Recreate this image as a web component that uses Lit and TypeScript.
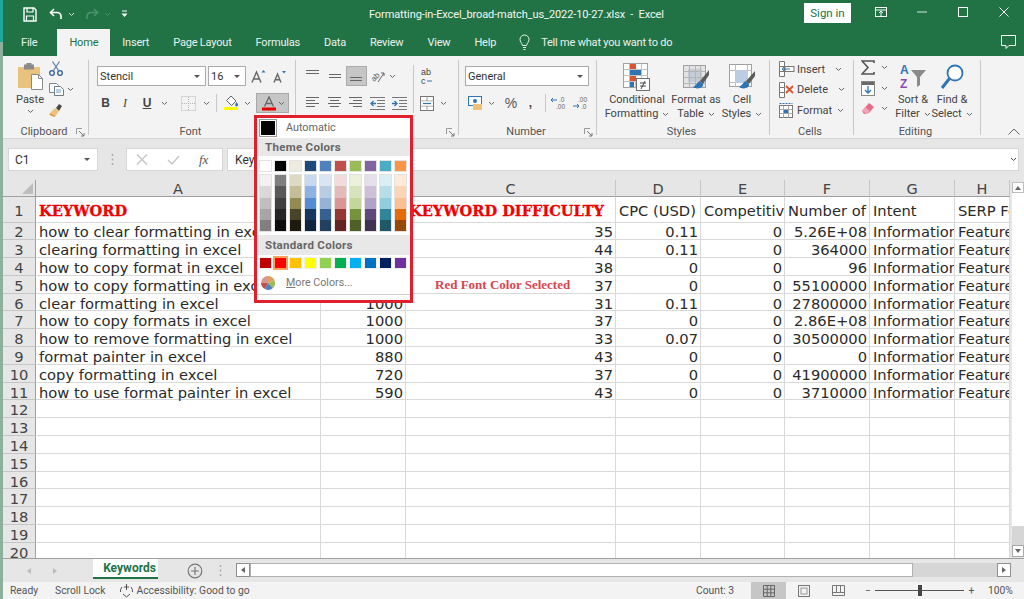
import { LitElement, html, css, svg } from "lit";
import { customElement } from "lit/decorators.js";

const chev = (c = "#666") => html`<svg class="chev" width="7" height="5" viewBox="0 0 7 5"><path d="M1 1l2.500 2.500L6 1" fill="none" stroke="${c}" stroke-width="1"/></svg>`;
const launcher = html`<svg width="9" height="9" viewBox="0 0 9 9"><path d="M.5 6V.5H6" fill="none" stroke="#999"/><path d="M3 3l5 5M8 5v3H5" fill="none" stroke="#777"/></svg>`;

const THEME = [
  ["#ffffff", "#f2f2f2", "#d9d9d9", "#bfbfbf", "#a6a6a6", "#808080"],
  ["#000000", "#7f7f7f", "#595959", "#404040", "#262626", "#0d0d0d"],
  ["#eeece1", "#ddd9c3", "#c4bd97", "#948a54", "#4a452a", "#1d1b10"],
  ["#1f497d", "#c6d9f0", "#8db3e2", "#548dd4", "#17365d", "#0f243e"],
  ["#4f81bd", "#dbe5f1", "#b8cce4", "#95b3d7", "#366092", "#244061"],
  ["#c0504d", "#f2dcdb", "#e5b9b7", "#d99694", "#953734", "#632423"],
  ["#9bbb59", "#ebf1dd", "#d7e3bc", "#c3d69b", "#76923c", "#4f6128"],
  ["#8064a2", "#e5e0ec", "#ccc1d9", "#b2a2c7", "#5f497a", "#3f3151"],
  ["#4bacc6", "#dbeef3", "#b7dde8", "#92cddc", "#31859b", "#205867"],
  ["#f79646", "#fdeada", "#fbd5b5", "#fac08f", "#e36c09", "#974806"],
];
const STD = ["#c00000", "#ff0000", "#ffc000", "#ffff00", "#92d050", "#00b050", "#00b0f0", "#0070c0", "#002060", "#7030a0"];

const COLS = ["A", "B", "C", "D", "E", "F", "G", "H"];
const KW = ["how to clear formatting in excel", "clearing formatting in excel", "how to copy format in excel", "how to copy formatting in excel", "clear formatting in excel", "how to copy formats in excel", "how to remove formatting in excel", "format painter in excel", "copy formatting in excel", "how to use format painter in excel"];
const VOL = ["", "", "", "", "1000", "1000", "1000", "880", "720", "590"];
const KD = ["35", "44", "38", "37", "31", "37", "33", "43", "37", "43"];
const CPC = ["0.11", "0.11", "0", "0", "0.11", "0", "0.07", "0", "0", "0"];
const NUM = ["5.26E+08", "364000", "96", "55100000", "27800000", "2.86E+08", "30500000", "0", "41900000", "3710000"];

const alignLines = (rows: number[][]) => html`<svg width="16" height="14" viewBox="0 0 16 14">${rows.map(([x, y, w]) => svg`<rect x="${x}" y="${y}" width="${w}" height="1" fill="#666"/>`)}</svg>`;

@customElement("app-root")
export class AppRoot extends LitElement {
  static styles = css`
    :host { display: block; width: 1024px; height: 599px; overflow: hidden; font-family: "Roboto", "Liberation Sans", sans-serif; }
    * { box-sizing: border-box; }
    svg { display: block; flex: none; }
    .app { position: relative; display: flex; width: 1024px; height: 599px; background: #e6e6e6; color: #444; font-size: 11px; }
    .edge { width: 3px; flex: none; display: flex; flex-direction: column; background: #8db09c; }
    .edge i { display: block; height: 42px; background: #1fa59a; }
    .main { width: 1021px; display: flex; flex-direction: column; }

    .title { height: 28px; background: #217346; color: #f2f7f4; display: flex; align-items: center; padding-left: 20px; font-size: 11px; }
    .title .save { margin-right: 12px; }
    .qa { display: flex; align-items: center; gap: 5px; width: 68px; }
    .qa .gap { width: 8px; }
    .doc { width: 346px; margin-left: 252px; white-space: pre; letter-spacing: -0.1px; flex: none; }
    .signin { width: 52px; height: 20px; background: #fff; color: #217346; display: flex; align-items: center; justify-content: center; margin-left: 89px; margin-top: -3px; font-size: 11.5px; }
    .win { display: flex; align-items: center; margin-left: 9px; margin-top: -4px; }
    .win span { width: 41px; display: flex; justify-content: center; }

    .tabs { height: 28px; background: #217346; color: #eaf2ed; display: flex; align-items: flex-end; padding-left: 6px; font-size: 11px; letter-spacing: -0.2px; }
    .tab { height: 27px; padding: 0 12px; display: flex; align-items: center; white-space: nowrap; }
    .tab.file { margin-right: 8px; }
    .tab.on { background: #f3f3f3; color: #217346; }
    .tell { display: flex; align-items: center; height: 27px; margin-left: 11px; gap: 11px; }
    .comment { margin-left: auto; margin-right: 8px; height: 27px; display: flex; align-items: center; }

    .ribbon { height: 83px; background: #f3f3f3; display: flex; padding-top: 4px; border-bottom: 1px solid #d4d4d4; }
    .grp { height: 75px; border-right: 1px solid #c8c8c8; flex: none; display: flex; flex-direction: column; }
    .g1 { width: 86px; } .g2 { width: 207px; } .g3 { width: 163px; } .g4 { width: 138px; } .g5 { width: 173px; } .g6 { width: 84px; } .g7 { width: 127px; }
    .gc { flex: 1; min-height: 0; }
    .lbl { height: 14px; margin-bottom: -4px; display: grid; grid-template-columns: 1fr auto 1fr; align-items: center; line-height: 14px; color: #555; padding-right: 3px; }
    .lbl svg { justify-self: end; }
    .stack { padding-top: 6px; display: flex; flex-direction: column; gap: 7px; }
    .row { display: flex; align-items: center; height: 20px; }
    .ib { display: flex; align-items: center; justify-content: center; height: 20px; flex: none; }
    .w8 { width: 8px; } .w10 { width: 10px; } .w12 { width: 12px; } .w17 { width: 17px; } .w21 { width: 21px; } .w22 { width: 22px; } .w24 { width: 24px; }
    .ml2 { margin-left: 2px; } .ml4 { margin-left: 4px; } .ml6 { margin-left: 6px; } .ml3 { margin-left: 3px; }
    .box { height: 20px; background: #fff; border: 1px solid #ababab; display: flex; align-items: center; padding: 0 5px 0 2px; color: #333; font-size: 11px; justify-content: space-between; flex: none; }
    .fontsel { width: 109px; } .sizesel { width: 38px; margin-left: 2px; } .numsel { width: 124px; }
    .tri { width: 0; height: 0; border-left: 3px solid transparent; border-right: 3px solid transparent; border-top: 3px solid #555; }
    .g2 .gc { padding-left: 8px; }
    .b { font: bold 12px "Liberation Sans", sans-serif; color: #444; }
    .i { font: italic 12px "Liberation Serif", serif; color: #444; }
    .u { font: bold 12px "Liberation Sans", sans-serif; text-decoration: underline; color: #444; }
    .sep { width: 1px; height: 18px; background: #c8c8c8; flex: none; }
    .grow-a { font: 14px "Liberation Sans", sans-serif; color: #555; }
    .fc { width: 33px; height: 20px; background: #c6c6c6; border: 1px solid #a8a8a8; margin-left: 4px; display: flex; align-items: center; padding-left: 2px; flex: none; }
    .fc .ib { width: 19px; }

    .clip { display: flex; padding-left: 13px; }
    .paste { width: 28px; padding-top: 3px; display: flex; flex-direction: column; align-items: center; }
    .paste .t { margin-top: 3px; line-height: 13px; }
    .paste .chev { margin-top: 3px; }
    .clipr { margin-left: 5px; padding-top: 1px; display: flex; flex-direction: column; gap: 7px; }
    .clipr div { display: flex; align-items: center; gap: 3px; }

    .g3 .gc { padding-left: 6.5px; display: flex; }
    .alL { width: 110.5px; flex: none; }
    .aln { width: 21.5px; }
    .tallsep { width: 1px; height: 48px; margin-top: 5px; background: #c8c8c8; flex: none; }
    .alR { padding-left: 2px; }
    .sel { background: #c6c6c6; border: 1px solid #ababab; }

    .g4 .gc { padding-left: 6px; }
    .g5 .gc { display: flex; padding-left: 8px; gap: 4px; }
    .big { display: flex; flex-direction: column; align-items: center; padding-top: 3px; flex: none; }
    .big .ic { height: 30px; }
    .big .tx { line-height: 14px; text-align: center; white-space: nowrap; display: flex; align-items: center; gap: 4px; justify-content: center; height: 14px; }
    .c1 { width: 64px; } .c2 { width: 46px; } .c3 { width: 38px; }
    .g6 .gc { padding-left: 9px; display: flex; flex-direction: column; }
    .cr { height: 20.5px; display: flex; align-items: center; gap: 2px; }
    .cr:first-child { margin-top: -1px; }
    .cr .chev { margin-left: 8px; }
    .cr:last-child .chev { margin-left: 3px; }
    .g7 .gc { display: flex; padding-left: 7px; }
    .edl { width: 34px; margin-top: -2.5px; display: flex; flex-direction: column; flex: none; }
    .edl div { height: 20.5px; display: flex; align-items: center; gap: 6px; }
    .s1 { width: 36px; } .s2 { width: 38px; margin-left: 2px; }
    .collapse { margin-left: auto; margin-right: 4px; align-self: flex-end; margin-bottom: 3px; }

    .fbar { height: 41px; padding: 9px 0 0 5px; display: flex; }
    .fbar > * { height: 23px; flex: none; }
    .name { width: 90px; background: #fff; border: 1px solid #d6d6d6; display: flex; align-items: center; justify-content: space-between; padding: 0 7px 0 6px; font-size: 12px; color: #333; }
    .dots { width: 28px; display: flex; align-items: center; justify-content: center; }
    .fbtn { width: 97px; background: #fff; border: 1px solid #d6d6d6; display: flex; align-items: center; padding-left: 9px; gap: 19px; }
    .fx { font: italic 13px "Liberation Serif", serif; color: #555; width: 14px; }
    .fin { width: 792px; margin-left: 4px; background: #fff; border: 1px solid #d6d6d6; display: flex; align-items: center; justify-content: space-between; padding: 0 1px 0 7px; font-size: 12px; color: #333; }

    .gridwrap { height: 378px; display: flex; }
    .sheet { width: 1007px; height: 378px; overflow: hidden; background: #fff; display: grid; grid-template-columns: 33px 285px 85px 210px 85px 84px 85px 85px 55px; grid-auto-rows: 17.8px; grid-template-rows: 17px 25.5px; font: 14.7px "DejaVu Sans", sans-serif; color: #2a2a2a; align-content: start; }
    .sheet > div { border-right: 1px solid #d9d9d9; border-bottom: 1px solid #d9d9d9; overflow-x: clip; overflow-y: visible; white-space: nowrap; display: flex; align-items: center; padding: 2px 2px 0 3px; line-height: 17px; }
    .sheet .hd { background: #e6e6e6; border-right: 1px solid #c6c6c6; border-bottom: 1px solid #9f9f9f; justify-content: center; color: #444; font-size: 14.5px; padding: 3px 0 0; }
    .sheet .rh { background: #e6e6e6; border-right: 1px solid #9f9f9f; border-bottom: 1px solid #c6c6c6; justify-content: center; color: #444; padding: 2px 0 0; overflow: hidden; }
    .sheet .corner { background: #e6e6e6; border-right: 1px solid #9f9f9f; border-bottom: 1px solid #9f9f9f; justify-content: flex-end; align-items: flex-end; padding: 0 2px 2px 0; }
    .sheet .r { justify-content: flex-end; }
    .sheet .k { font: bold 14.6px "DejaVu Serif", serif; color: #f00000; -webkit-text-stroke: 0.3px #f00000; }
    .sheet .ann { position: relative; overflow: visible; }
    .note { position: absolute; left: 29px; top: 1px; line-height: 17px; font: bold 13px "Liberation Serif", serif; color: #d9444e; }
    .sheet .clip0 { padding-right: 0; }

    .vs { width: 14px; background: #e6e6e6; padding: 2px 0 1px 2px; display: flex; flex-direction: column; flex: none; }
    .vs .up { height: 11px; background: #fff; border: 1px solid #bdbdbd; display: flex; align-items: center; justify-content: center; flex: none; }
    .vs .dn { height: 12px; background: #fff; border: 1px solid #a8a8a8; display: flex; align-items: center; justify-content: center; flex: none; }
    .vs .th { height: 333px; background: #fff; flex: none; }
    .vs .sp { flex: 1; background: #d6d6d6; }
    .utri { border-bottom: 4px solid #666; border-left: 3px solid transparent; border-right: 3px solid transparent; width: 0; height: 0; }
    .dtri { border-top: 4px solid #666; border-left: 3px solid transparent; border-right: 3px solid transparent; width: 0; height: 0; }

    .stabs { height: 24px; display: flex; background: #e6e6e6; border-top: 1px solid #9f9f9f; }
    .nav { width: 90px; display: flex; align-items: center; padding-left: 24px; gap: 22px; flex: none; }
    .ltri { border-right: 4px solid #bbb; border-top: 3px solid transparent; border-bottom: 3px solid transparent; width: 0; height: 0; }
    .rtri { border-left: 4px solid #bbb; border-top: 3px solid transparent; border-bottom: 3px solid transparent; width: 0; height: 0; }
    .sheettab { width: 65px; height: 20px; background: #fff; color: #217346; font: bold 12px "Roboto", sans-serif; display: flex; align-items: center; justify-content: center; padding-left: 8px; border-bottom: 2px solid #217346; flex: none; }
    .plus { margin-left: 29px; width: 16px; display: flex; align-items: center; flex: none; }
    .dots2 { margin-left: 16px; width: 4px; display: flex; align-items: center; flex: none; }
    .hs { margin-left: 13px; width: 775px; height: 14px; margin-top: 4px; display: flex; background: #d6d6d6; flex: none; }
    .hs .btn { width: 14px; background: #fff; border: 1px solid #8f8f8f; display: flex; align-items: center; justify-content: center; flex: none; }
    .hs .th { width: 663px; background: #fff; border: 1px solid #b0b0b0; flex: none; }
    .hs .sp { flex: 1; }
    .hs .l { border-right: 4px solid #666; border-top: 3px solid transparent; border-bottom: 3px solid transparent; width: 0; height: 0; }
    .hs .r2 { border-left: 4px solid #666; border-top: 3px solid transparent; border-bottom: 3px solid transparent; width: 0; height: 0; }

    .status { height: 17px; background: #f3f3f3; display: flex; align-items: center; font-size: 10.3px; color: #555; white-space: nowrap; }
    .stl { width: 693px; padding-left: 7px; display: flex; align-items: center; flex: none; }
    .st2 { margin-left: 17px; }
    .acc { margin-left: 14px; display: flex; align-items: center; gap: 2px; }
    .count { width: 55px; flex: none; }
    .views { display: flex; height: 17px; flex: none; }
    .views span { width: 35px; display: flex; align-items: center; justify-content: center; }
    .views .on { background: #c6c6c6; }
    .zoom { display: flex; align-items: center; margin-left: 8px; flex: none; }
    .zoom .mn { width: 8px; text-align: center; }
    .zoom .pl { width: 9px; margin-left: 3px; text-align: center; }
    .track { width: 89px; height: 1px; background: #555; position: relative; margin-left: 3px; }
    .thumb { position: absolute; left: 43px; top: -5px; width: 4px; height: 11px; background: #444; }
    .pct { margin-left: 12px; }

    .popup { position: absolute; left: 254px; top: 115px; width: 159px; height: 188px; border: 3px solid #e0212d; background: #fff; display: flex; flex-direction: column; z-index: 5; color: #666; }
    .auto { height: 20px; display: flex; align-items: center; padding-left: 3px; flex: none; font-size: 10.8px; line-height: 18px; }
    .auto .sw { width: 16px; height: 16px; background: #000; border: 1px solid #fff; outline: 1px solid #9a9a9a; margin-right: 10px; }
    .phead { height: 18px; background: #e8e8e8; display: flex; align-items: center; padding-left: 8px; font-weight: 700; font-size: 11.5px; letter-spacing: 0.3px; color: #666; flex: none; }
    .ph2 { height: 20px; margin-top: 4px; }
    .pal { display: grid; grid-template-columns: repeat(10, 15.1px); padding-left: 0.5px; flex: none; justify-items: center; }
    .pal i { display: block; width: 11px; height: 10px; }
    .pal1 { margin-top: 5px; }
    .pal1 i { outline: 1px solid #e2e2e2; }
    .col { width: 11px; margin-top: 4px; display: flex; flex-direction: column; outline: 1px solid #e2e2e2; }
    .col i { height: 11.3px; }
    .pal3 { margin-top: 3px; }
    .pal3 i { outline: 1px solid #eee; }
    .pal3 .picked { outline: 2px solid #f6a35c; }
    .more { height: 24px; margin-top: 3px; display: flex; align-items: center; padding-left: 4px; gap: 11px; border-bottom: 1px solid #d0d0d0; flex: none; font-size: 10.7px; color: #777; }
    .more u { text-decoration: underline; }
  `;

  render() {
    const I = {
      save: html`<svg class="save" width="14" height="15" viewBox="0 0 14 15"><path d="M1 1h10l2 2v11H1z" fill="none" stroke="#fff" stroke-width="1.400"/><path d="M4 1v4h6V1M3.500 14V9h7v5" fill="none" stroke="#fff" stroke-width="1.200"/></svg>`,
      undo: html`<svg width="14" height="12" viewBox="0 0 14 12"><path d="M5 1L1.500 4.500 5 8" fill="none" stroke="#fff" stroke-width="1.600"/><path d="M2 4.500h6a4 4 0 0 1 4 4V11" fill="none" stroke="#fff" stroke-width="1.600"/></svg>`,
      redo: html`<svg width="14" height="12" viewBox="0 0 14 12"><path d="M9 1l3.500 3.500L9 8" fill="none" stroke="#4d9270" stroke-width="1.600"/><path d="M12 4.500H6a4 4 0 0 0-4 4V11" fill="none" stroke="#4d9270" stroke-width="1.600"/></svg>`,
      qat: html`<svg width="7" height="8" viewBox="0 0 7 8"><path d="M1 1h5" stroke="#fff"/><path d="M.5 3.500h6L3.500 7z" fill="#fff"/></svg>`,
    };
    return html`<div class="app">
      <div class="edge"><i></i></div>
      <div class="main">
        <div class="title">
          ${I.save}
          <div class="qa">${I.undo}${chev("#cfe3d8")}<span class="gap"></span>${I.redo}${chev("#4d9270")}<span class="gap"></span>${I.qat}</div>
          <div class="doc">Formatting-in-Excel_broad-match_us_2022-10-27.xlsx  -  Excel</div>
          <div class="signin">Sign in</div>
          <div class="win">
            <span><svg width="12" height="10" viewBox="0 0 12 10"><rect x=".5" y=".5" width="11" height="9" fill="none" stroke="#fff"/><path d="M.5 3h11M6 4v5M4 6l2-2 2 2" fill="none" stroke="#fff"/></svg></span>
            <span><svg width="10" height="2" viewBox="0 0 10 2"><path d="M0 1h10" stroke="#d8e8df"/></svg></span>
            <span><svg width="10" height="10" viewBox="0 0 10 10"><rect x=".5" y=".5" width="9" height="9" fill="none" stroke="#fff"/></svg></span>
            <span><svg width="10" height="10" viewBox="0 0 10 10"><path d="M.5.5l9 9M9.500.5l-9 9" stroke="#fff"/></svg></span>
          </div>
        </div>
        <div class="tabs">
          <div class="tab file">File</div><div class="tab on">Home</div>
          <div class="tab">Insert</div><div class="tab">Page Layout</div><div class="tab">Formulas</div><div class="tab">Data</div><div class="tab">Review</div><div class="tab">View</div><div class="tab">Help</div>
          <div class="tell">
            <svg width="11" height="17" viewBox="0 0 11 17"><path d="M3.500 11.500C3 9 1 8 1 5.500a4.500 4.500 0 0 1 9 0C10 8 8 9 7.500 11.500zM4 13.500h3M4.500 15.500h2" fill="none" stroke="#e8f1ec"/></svg>
            <span>Tell me what you want to do</span>
          </div>
          <div class="comment"><svg width="15" height="15" viewBox="0 0 15 15"><path d="M.5.500h14v10H8l-3 3v-3H.5z" fill="none" stroke="#fff"/></svg></div>
        </div>

        <div class="ribbon">
          <div class="grp g1">
            <div class="gc clip">
              <div class="paste">
                <svg width="27" height="27" viewBox="0 0 27 27"><rect x="1" y="4" width="22" height="21" fill="#e9c27e"/><rect x="7" y="1.500" width="10" height="5" fill="#8a8a8a"/><rect x="9.500" y="0" width="5" height="3" fill="#8a8a8a"/><path d="M14.500 11.500h7l4 4v11h-11z" fill="#fff" stroke="#8a8a8a"/><path d="M21.500 11.500v4h4" fill="none" stroke="#8a8a8a"/></svg>
                <div class="t">Paste</div>${chev()}
              </div>
              <div class="clipr">
                <div><svg width="14" height="15" viewBox="0 0 14 15"><path d="M3.500 0.500l6 9M10.500.5l-6 9" stroke="#5b7ea3" fill="none" stroke-width="1.200"/><circle cx="3" cy="12" r="2.300" fill="none" stroke="#2f5f92" stroke-width="1.300"/><circle cx="11" cy="12" r="2.300" fill="none" stroke="#2f5f92" stroke-width="1.300"/></svg></div>
                <div><svg width="15" height="13" viewBox="0 0 15 13"><path d="M.5.500h7l2 2v7H.5z" fill="#fff" stroke="#7a8a94"/><path d="M5.500 3.500h6l3 3v6h-9z" fill="#fff" stroke="#6e7c86"/><path d="M7 7h5M7 9h5" stroke="#6ea0c8"/></svg>${chev()}</div>
                <div><svg width="14" height="15" viewBox="0 0 14 15"><path d="M7 5l3-4 3 2-3 5z" fill="#4a4a4a"/><path d="M1 10l5-5 4 3-4 6z" fill="#eec27a"/><path d="M1 10l-.5 2 5 2 .5-1z" fill="#d79a3f"/></svg></div>
              </div>
            </div>
            <div class="lbl"><span></span><span>Clipboard</span>${launcher}</div>
          </div>

          <div class="grp g2">
            <div class="gc stack">
              <div class="row">
                <div class="box fontsel"><span>Stencil</span><i class="tri"></i></div>
                <div class="box sizesel"><span>16</span><i class="tri"></i></div>
                <div class="ib w21 ml2"><svg width="15" height="14" viewBox="0 0 15 14"><path d="M1 13.500L5.500 3 10 13.500M2.800 10h5.400" fill="none" stroke="#666" stroke-width="1.400"/><path d="M10.500 3.500L12.500 1l2 2.500z" fill="#2f74b5"/></svg></div>
                <div class="ib w21"><svg width="14" height="13" viewBox="0 0 14 13"><path d="M1 12.500L4.500 4 8 12.500M2.300 9.800h4.400" fill="none" stroke="#666" stroke-width="1.400"/><path d="M9 1h4l-2 2.500z" fill="#2f74b5"/></svg></div>
              </div>
              <div class="row">
                <div class="ib w17 b">B</div><div class="ib w22 i">I</div><div class="ib w22 u">U</div><div class="ib w12">${chev()}</div>
                <div class="ib w24 ml6"><svg width="15" height="15" viewBox="0 0 15 15"><rect x=".5" y=".5" width="14" height="14" fill="none" stroke="#b5b5b5" stroke-dasharray="1 1"/><path d="M7.500 1v13M1 7.500h13" stroke="#b5b5b5" stroke-dasharray="1 1"/></svg></div>
                <div class="ib w12">${chev()}</div><span class="sep ml4"></span>
                <div class="ib w22 ml3"><svg width="15" height="16" viewBox="0 0 15 16"><path d="M7 1l5 5-4.500 4.500-5-5z" fill="#fff" stroke="#666"/><path d="M12.500 7c1 1.500 1.500 2.300 1.500 3a1.400 1.400 0 0 1-2.800 0c0-.7.500-1.500 1.300-3z" fill="#2f74b5"/><rect x="0" y="12" width="14" height="3" fill="#ffff00"/></svg></div>
                <div class="ib w10">${chev()}</div>
                <div class="fc"><div class="ib"><svg width="14" height="15" viewBox="0 0 14 15"><path d="M2.500 10.500L7 1l4.500 9.500M4 7.500h6" fill="none" stroke="#666" stroke-width="1.300"/><rect x="0" y="11.500" width="14" height="3" fill="#e80000"/></svg></div>${chev()}</div>
              </div>
            </div>
            <div class="lbl"><span></span><span>Font</span><span></span></div>
          </div>

          <div class="grp g3">
            <div class="gc">
              <div class="alL stack">
                <div class="row">
                  <div class="ib aln">${alignLines([[1, 1, 13], [1, 4, 13]])}</div>
                  <div class="ib aln">${alignLines([[2, 5, 12], [2, 8, 12]])}</div>
                  <div class="ib aln sel">${alignLines([[2, 8, 12], [2, 11, 12]])}</div>
                  <div class="ib aln"><svg width="15" height="15" viewBox="0 0 15 15"><text x="1" y="10" transform="rotate(-45 6 8)" font-size="8" font-family="Liberation Sans" fill="#555">ab</text><path d="M8 13l6-9M11 4h3v3" fill="none" stroke="#666"/></svg></div>
                  <div class="ib w8">${chev()}</div>
                </div>
                <div class="row">
                  <div class="ib aln">${alignLines([[1, 1, 13], [1, 4, 9], [1, 7, 13], [1, 10, 9]])}</div>
                  <div class="ib aln">${alignLines([[1, 1, 13], [3, 4, 9], [1, 7, 13], [3, 10, 9]])}</div>
                  <div class="ib aln">${alignLines([[1, 1, 13], [5, 4, 9], [1, 7, 13], [5, 10, 9]])}</div>
                  <div class="ib aln"><svg width="15" height="13" viewBox="0 0 15 13"><path d="M0 .5h15M7 3.500h8M7 6.500h8M7 9.500h8M0 12.500h15" stroke="#777"/><path d="M6 6.500H1M3.500 4L1 6.500 3.500 9" fill="none" stroke="#2f74b5" stroke-width="1.300"/></svg></div>
                  <div class="ib aln"><svg width="15" height="13" viewBox="0 0 15 13"><path d="M0 .5h15M7 3.500h8M7 6.500h8M7 9.500h8M0 12.500h15" stroke="#777"/><path d="M0 6.500h5M2.500 4L5 6.500 2.500 9" fill="none" stroke="#2f74b5" stroke-width="1.300"/></svg></div>
                </div>
              </div>
              <span class="tallsep"></span>
              <div class="alR stack">
                <div class="row"><div class="ib w22"><svg width="14" height="17" viewBox="0 0 14 17"><text x="1" y="7" font-size="9" font-family="Liberation Sans" fill="#444">ab</text><text x="1" y="16" font-size="9" font-family="Liberation Sans" fill="#444">c</text><path d="M7 13h5" stroke="#2f74b5"/></svg></div></div>
                <div class="row"><div class="ib w22"><svg width="14" height="15" viewBox="0 0 14 15"><rect x=".5" y=".5" width="13" height="14" fill="#fff" stroke="#777"/><path d="M.5 5h13M.5 10h13M7 .5v4.500M7 10v5" stroke="#999"/><rect x="1" y="5.500" width="12" height="4" fill="#fff"/><path d="M3 7.500h8" stroke="#2f74b5" stroke-width="1.200"/></svg></div><div class="ib w10">${chev()}</div></div>
              </div>
            </div>
            <div class="lbl"><span></span><span>Alignment</span>${launcher}</div>
          </div>

          <div class="grp g4">
            <div class="gc stack">
              <div class="row"><div class="box numsel"><span>General</span><i class="tri"></i></div></div>
              <div class="row">
                <div class="ib w21"><svg width="15" height="15" viewBox="0 0 15 15"><rect x=".5" y=".5" width="13" height="9" fill="#fff" stroke="#2f74b5"/><circle cx="7" cy="5" r="2" fill="#2f74b5"/><rect x="5" y="8" width="9" height="6" fill="#eec27a"/></svg></div>
                <div class="ib w10">${chev()}</div>
                <div class="ib w22 ml4 grow-a">%</div>
                <div class="ib w17 b">,</div>
                <span class="sep ml6"></span>
                <div class="ib w22 ml2"><svg width="18" height="14" viewBox="0 0 18 14"><path d="M1 4h6M3 2L1 4l2 2" fill="none" stroke="#2f74b5"/><text x="9" y="6" font-size="6.500" font-family="Liberation Sans" fill="#666">.0</text><text x="6" y="13" font-size="6.500" font-family="Liberation Sans" fill="#666">.00</text></svg></div>
                <div class="ib w22"><svg width="18" height="14" viewBox="0 0 18 14"><text x="6" y="6" font-size="6.500" font-family="Liberation Sans" fill="#666">.00</text><path d="M1 10h6M5 8l2 2-2 2" fill="none" stroke="#2f74b5"/><text x="9" y="13" font-size="6.500" font-family="Liberation Sans" fill="#666">.0</text></svg></div>
              </div>
            </div>
            <div class="lbl"><span></span><span>Number</span>${launcher}</div>
          </div>

          <div class="grp g5">
            <div class="gc">
              <div class="big c1">
                <div class="ic"><svg width="28" height="28" viewBox="0 0 28 28"><rect x=".5" y=".5" width="24" height="24" fill="#fff" stroke="#a0a0a0"/><path d="M.5 6.500h24M.5 12.500h24M.5 18.500h24M6.500.5v24M12.500.5v24M18.500.5v24" stroke="#c0c0c0"/><rect x="7" y="1" width="6" height="5" fill="#d9542f"/><rect x="7" y="7" width="11" height="5" fill="#2f74b5"/><rect x="7" y="13" width="6" height="5" fill="#d9542f"/><rect x="7" y="19" width="4" height="5" fill="#2f74b5"/><rect x="13.500" y="15.500" width="13" height="12" fill="#fff" stroke="#707070"/><path d="M17 20h6M17 23h6M22 18l-4 8" stroke="#444" fill="none"/></svg></div>
                <div class="tx">Conditional</div><div class="tx">Formatting ${chev()}</div>
              </div>
              <div class="big c2">
                <div class="ic"><svg width="28" height="28" viewBox="0 0 28 28"><rect x="1.500" y="2.500" width="22" height="22" fill="#e3e3e3" stroke="#a0a0a0"/><rect x="6" y="6" width="14" height="13" fill="#c5ccd8"/><path d="M1.500 8.500h22M1.500 14.500h22M1.500 20.500h22M7.500 2.500v22M13.500 2.500v22M18.500 2.500v22" stroke="#b5b5b5"/><path d="M27 7L18 18l3 3 6-9z" fill="#5c5c5c"/><path d="M18 18c-3 1-3 4-7 6 4 3 11 1 10-3z" fill="#2f74b5"/></svg></div>
                <div class="tx">Format as</div><div class="tx">Table ${chev()}</div>
              </div>
              <div class="big c3">
                <div class="ic"><svg width="28" height="28" viewBox="0 0 28 28"><rect x="1.500" y="1.500" width="22" height="22" fill="#fff" stroke="#a0a0a0"/><path d="M1.500 7.500h22M7.500 1.500v22M19.500 1.500v22M1.500 19.500h22" stroke="#bbb"/><rect x="7" y="7" width="13" height="13" fill="#bccde3"/><path d="M27 8L18 18l3 3 6-8z" fill="#5c5c5c"/><path d="M18 18c-3 1-3 4-7 6 4 3 11 1 10-3z" fill="#2f74b5"/></svg></div>
                <div class="tx">Cell</div><div class="tx">Styles ${chev()}</div>
              </div>
            </div>
            <div class="lbl"><span></span><span>Styles</span><span></span></div>
          </div>

          <div class="grp g6">
            <div class="gc">
              <div class="cr"><svg width="16" height="16" viewBox="0 0 16 16"><path d="M.5.500h5v5h-5zM.5 10.500h5v5h-5zM.5 5.500h5v5h-5z" fill="#fff" stroke="#777"/><rect x="6" y="5.500" width="9" height="5" fill="#fff" stroke="#777"/><path d="M3 8h8M5 6L3 8l2 2" stroke="#2f74b5" fill="none"/></svg><span>Insert</span>${chev()}</div>
              <div class="cr"><svg width="16" height="16" viewBox="0 0 16 16"><path d="M.5.500h5v5h-5zM.5 10.500h5v5h-5zM.5 5.500h5v5h-5z" fill="#fff" stroke="#777"/><path d="M7 4l7 7M14 4l-7 7" stroke="#d9542f" stroke-width="1.800"/></svg><span>Delete</span>${chev()}</div>
              <div class="cr"><svg width="16" height="16" viewBox="0 0 16 16"><rect x=".5" y="3.500" width="13" height="12" fill="#fff" stroke="#777"/><path d="M.5 1.500h13" stroke="#2f74b5" stroke-dasharray="2 1"/><path d="M.5 7.500h13M.5 11.500h13M4.500 3.500v12M9.500 3.500v12" stroke="#aaa"/><rect x="5" y="8" width="4" height="3" fill="#2f74b5"/></svg><span>Format</span>${chev()}</div>
            </div>
            <div class="lbl"><span></span><span>Cells</span><span></span></div>
          </div>

          <div class="grp g7">
            <div class="gc">
              <div class="edl">
                <div><svg width="14" height="15" viewBox="0 0 14 15"><path d="M13 3V1H1l6 6.500L1 14h12v-2" fill="none" stroke="#555" stroke-width="1.600"/></svg>${chev()}</div>
                <div><svg width="14" height="15" viewBox="0 0 14 15"><rect x=".5" y=".5" width="13" height="14" fill="#fff" stroke="#888"/><rect x="1" y="1" width="12" height="3" fill="#6a6a6a"/><path d="M7 5v7M4 9l3 3 3-3" stroke="#2f74b5" stroke-width="1.300" fill="none"/></svg>${chev()}</div>
                <div><svg width="14" height="13" viewBox="0 0 14 13"><path d="M8 1l5 4-5 6-5 1-2-3z" fill="#e86a88"/><path d="M1 9l3-4 5 4-3 3z" fill="#f3a4b6"/></svg>${chev()}</div>
              </div>
              <div class="big s1">
                <div class="ic"><svg width="28" height="28" viewBox="0 0 28 28"><text x="1" y="11" font-size="12" font-weight="700" font-family="Liberation Sans" fill="#2f74b5">A</text><text x="1" y="25" font-size="12" font-weight="700" font-family="Liberation Sans" fill="#8a4cb5">Z</text><path d="M12 7h15l-6 7v8l-3 2V14z" fill="#8a8a8a"/></svg></div>
                <div class="tx">Sort &amp;</div><div class="tx">Filter ${chev()}</div>
              </div>
              <div class="big s2">
                <div class="ic"><svg width="25" height="28" viewBox="0 0 25 28"><circle cx="15" cy="10" r="7.500" fill="#fff" stroke="#2f74b5" stroke-width="1.800"/><path d="M9.500 15.500L2 25" stroke="#2f74b5" stroke-width="3"/></svg></div>
                <div class="tx">Find &amp;</div><div class="tx">Select ${chev()}</div>
              </div>
            </div>
            <div class="lbl"><span></span><span>Editing</span><span></span></div>
          </div>
          <svg class="collapse" width="12" height="7" viewBox="0 0 12 7"><path d="M.5 6.500L6 1l5.500 5.500" fill="none" stroke="#666"/></svg>
        </div>

        <div class="fbar">
          <div class="name"><span>C1</span><i class="tri"></i></div>
          <div class="dots"><svg width="3" height="11" viewBox="0 0 3 11"><path d="M1.500 0v2M1.500 4.500v2M1.500 9v2" stroke="#aaa" stroke-width="1.500"/></svg></div>
          <div class="fbtn">
            <svg width="12" height="11" viewBox="0 0 12 11"><path d="M1 .5l10 10M11 .5l-10 10" stroke="#c4c4c4" stroke-width="1.300"/></svg>
            <svg width="13" height="10" viewBox="0 0 13 10"><path d="M1 5l4 4 7-8" fill="none" stroke="#c4c4c4" stroke-width="1.300"/></svg>
            <span class="fx">fx</span>
          </div>
          <div class="fin"><span>Keyword Difficulty</span>${chev("#444")}</div>
        </div>

        <div class="gridwrap">
          <div class="sheet">
            <div class="corner"><svg width="11" height="11" viewBox="0 0 11 11"><path d="M11 0v11H0z" fill="#bdbdbd"/></svg></div>
            ${COLS.map((c) => html`<div class="hd">${c}</div>`)}
            <div class="rh">1</div>
            <div class="k">KEYWORD</div><div></div>
            <div class="k clip0">KEYWORD DIFFICULTY</div>
            <div>CPC (USD)</div><div class="clip0">Competitive</div><div class="clip0">Number of Results</div><div>Intent</div><div class="clip0">SERP Features</div>
            ${KW.map((k, i) => html`
              <div class="rh">${i + 2}</div>
              <div class="clip0">${k}</div>
              <div class="r">${VOL[i]}</div>
              <div class="r ${i === 3 ? "ann" : ""}">${i === 3 ? html`<span class="note">Red Font Color Selected</span>` : ""}${KD[i]}</div>
              <div class="r">${CPC[i]}</div>
              <div class="r">0</div>
              <div class="r">${NUM[i]}</div>
              <div class="clip0">Informational</div>
              <div class="clip0">Features</div>
            `)}
            ${Array.from({ length: 9 }, (_, i) => html`
              <div class="rh">${i + 12}</div>
              ${COLS.map(() => html`<div></div>`)}
            `)}
          </div>
          <div class="vs">
            <div class="up"><i class="utri"></i></div>
            <div class="th"></div>
            <div class="sp"></div>
            <div class="dn"><i class="dtri"></i></div>
          </div>
        </div>

        <div class="stabs">
          <div class="nav"><i class="ltri"></i><i class="rtri"></i></div>
          <div class="sheettab">Keywords</div>
          <div class="plus"><svg width="16" height="16" viewBox="0 0 16 16"><circle cx="8" cy="8" r="6.800" fill="none" stroke="#777" stroke-width="1.200"/><path d="M8 4v8M4 8h8" stroke="#777" stroke-width="1.200"/></svg></div>
          <div class="dots2"><svg width="3" height="11" viewBox="0 0 3 11"><path d="M1.500 0v2M1.500 4.500v2M1.500 9v2" stroke="#aaa" stroke-width="1.500"/></svg></div>
          <div class="hs">
            <div class="btn"><i class="l"></i></div>
            <div class="th"></div>
            <div class="sp"></div>
            <div class="btn"><i class="r2"></i></div>
          </div>
        </div>

        <div class="status">
          <div class="stl">
            <span>Ready</span><span class="st2">Scroll Lock</span>
            <span class="acc"><svg width="15" height="14" viewBox="0 0 15 14"><path d="M3 3a6 6 0 0 0-1.500 5M12 3a6 6 0 0 1 1.500 5M4 10l3.500 3L11 10" fill="none" stroke="#555"/><path d="M7.500 0v6M5 3h5" stroke="#555"/></svg>Accessibility: Good to go</span>
          </div>
          <span class="count">Count: 3</span>
          <div class="views">
            <span class="on"><svg width="12" height="12" viewBox="0 0 12 12"><path d="M.5.500h11v11H.5zM4.200.5v11M7.800.5v11M.5 4.200h11M.5 7.800h11" fill="none" stroke="#666"/></svg></span>
            <span><svg width="12" height="12" viewBox="0 0 12 12"><rect x=".5" y=".5" width="11" height="11" fill="none" stroke="#777"/><rect x="3" y="3" width="6" height="6" fill="none" stroke="#999"/></svg></span>
            <span><svg width="13" height="11" viewBox="0 0 13 11"><path d="M.5.500h12v10H.5zM.5 7.500h12M4.500.5v7M8.500.5v7" fill="none" stroke="#777"/></svg></span>
          </div>
          <div class="zoom"><span class="mn">−</span><div class="track"><i class="thumb"></i></div><span class="pl">+</span></div>
          <span class="pct">100%</span>
        </div>
      </div>

      <div class="popup">
        <div class="auto"><span class="sw"></span><span>Automatic</span></div>
        <div class="phead">Theme Colors</div>
        <div class="pal pal1">${THEME.map((c) => html`<i style="background:${c[0]}"></i>`)}</div>
        <div class="pal">${THEME.map((c) => html`<div class="col">${c.slice(1).map((s) => html`<i style="background:${s}"></i>`)}</div>`)}</div>
        <div class="phead ph2">Standard Colors</div>
        <div class="pal pal3">${STD.map((c, i) => html`<i class="${i === 1 ? "picked" : ""}" style="background:${c}"></i>`)}</div>
        <div class="more">
          <svg width="14" height="14" viewBox="0 0 14 14"><path d="M7 7V0a7 7 0 0 1 6.500 4.500z" fill="#e0a060"/><path d="M7 7l6.500-2.500A7 7 0 0 1 12 12z" fill="#9bbb59"/><path d="M7 7l5 5a7 7 0 0 1-8 1z" fill="#4f81bd"/><path d="M7 7l-3 6A7 7 0 0 1 0 7z" fill="#c0504d"/><path d="M7 7H0a7 7 0 0 1 7-7z" fill="#d99694"/></svg>
          <span><u>M</u>ore Colors...</span>
        </div>
      </div>
    </div>`;
  }
}
